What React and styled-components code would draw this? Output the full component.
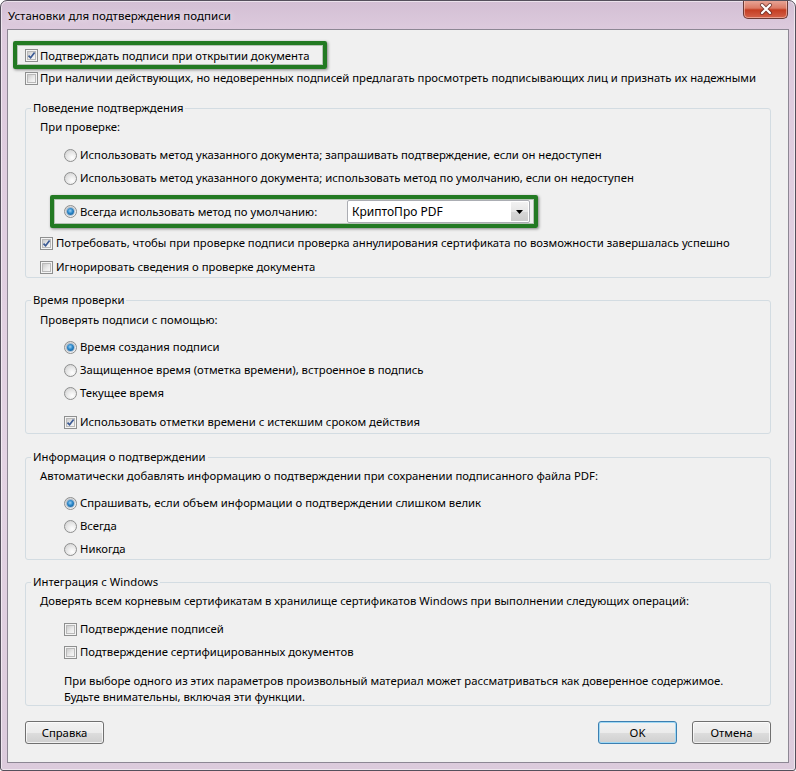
import styled, { createGlobalStyle } from "styled-components";

const GlobalStyle = createGlobalStyle`
  html, body {
    margin: 0;
    padding: 0;
    background: #ffffff;
  }
  body {
    font-family: "Noto Sans", "Open Sans", sans-serif;
    font-size: 11.3px;
    color: #000;
  }
`;

const Window = styled.div`
  width: 796px;
  height: 771px;
  box-sizing: border-box;
  border: 1px solid #55505c;
  border-radius: 7px 7px 3px 3px;
  background: linear-gradient(180deg, #d3bfd4 0px, #ddcadd 28px, #e3d3e3 60%, #dccbdc 100%);
  box-shadow: inset 0 0 0 1px rgba(255, 255, 255, 0.55);
  padding: 0 6px 7px 6px;
  display: flex;
  flex-direction: column;
  overflow: hidden;
`;

const TitleBar = styled.div`
  height: 28px;
  display: flex;
  align-items: flex-start;
  justify-content: space-between;
`;

const Title = styled.div`
  padding: 7px 0 0 1px;
  font-size: 11.5px;
  line-height: 16px;
  color: #000;
  text-shadow: 0 0 6px rgba(255, 255, 255, 0.9);
`;

const CloseButton = styled.div`
  width: 45px;
  height: 19px;
  margin-top: -1px;
  margin-right: 1px;
  box-sizing: border-box;
  border: 1px solid #6b3a36;
  border-top: none;
  border-radius: 0 0 5px 5px;
  background: linear-gradient(180deg, #e9a99b 0%, #dc7a65 45%, #c43d22 55%, #d4614a 100%);
  box-shadow: inset 0 0 0 1px rgba(255, 220, 210, 0.5);
  display: flex;
  align-items: center;
  justify-content: center;
`;

const Client = styled.div`
  flex: 1;
  border: 1px solid #8d8794;
  background: #f0f0f0;
  display: flex;
  flex-direction: column;
`;

const Highlight = styled.div`
  box-sizing: border-box;
  display: flex;
  align-items: center;
  border: 4px solid #237a23;
  border-radius: 2px;
  box-shadow: 1px 1px 3px rgba(0, 0, 0, 0.45), inset 0 0 0 1px rgba(0, 60, 0, 0.25);
  align-self: flex-start;
`;

const TopHighlight = styled(Highlight)`
  margin: 11px 0 0 5px;
  width: 314px;
  height: 28px;
  padding: 0 0 0 8px;
`;

const MethodHighlight = styled(Highlight)`
  margin: 7px 0 0 24px;
  width: 488px;
  height: 33px;
  padding: 0 4px 0 10px;
`;

const Row = styled.div`
  display: flex;
  align-items: center;
  height: 20px;
  margin-top: ${(p) => (p.$mt ?? 3)}px;
  padding-left: ${(p) => p.$indent ?? 0}px;
  white-space: nowrap;
  line-height: 16px;
`;

const Label = styled.span`
  margin-left: ${(p) => p.$gap ?? 3}px;
  flex: none;
`;

const Group = styled.fieldset`
  margin: ${(p) => p.$mt}px 17px 0 17px;
  padding: 0 0 ${(p) => p.$pb ?? 0}px 0;
  min-width: 0;
  border: 1px solid #d3dce2;
  border-radius: 3px;
`;

const Legend = styled.legend`
  margin-left: 5px;
  padding: 0 2px;
  line-height: 16px;
  height: 16px;
`;

const Note = styled.div`
  margin-top: 11px;
  padding-left: 38px;
  line-height: 16px;
`;

const BoxShell = styled.span`
  width: 13px;
  height: 13px;
  box-sizing: border-box;
  flex: none;
  border: 1px solid #8e8f8f;
  background: #f4f4f4;
  padding: 1px;
  display: inline-flex;
`;

const BoxInner = styled.span`
  flex: 1;
  border: 1px solid #b9b9b9;
  background: linear-gradient(135deg, #cbcbcb 0%, #e9e9e9 55%, #f7f7f7 100%);
  position: relative;
`;

const RadioShell = styled.span`
  width: 13px;
  height: 13px;
  box-sizing: border-box;
  flex: none;
  border-radius: 50%;
  border: 1px solid #8e8f8f;
  background: radial-gradient(circle at 65% 70%, #ffffff 0%, #e4e4e4 55%, #c9c9c9 100%);
  display: inline-flex;
  align-items: center;
  justify-content: center;
`;

const RadioDot = styled.span`
  width: 7px;
  height: 7px;
  border-radius: 50%;
  background: radial-gradient(circle at 45% 40%, #9bd1f5 0%, #2a86c8 45%, #0f4f86 100%);
  box-shadow: 0 0 0 1px rgba(60, 110, 160, 0.35);
`;

const Combo = styled.div`
  width: 183px;
  height: 23px;
  box-sizing: border-box;
  border: 1px solid #abadb3;
  border-radius: 2px;
  background: #fff;
  display: flex;
  align-items: center;
  margin-left: auto;
  font-size: 12px;
`;

const ComboText = styled.span`
  flex: 1;
  padding-left: 4px;
`;

const ComboArrow = styled.span`
  width: 17px;
  height: 19px;
  margin-right: 1px;
  background: linear-gradient(180deg, #f2f2f2 0%, #e6e6e6 50%, #d7d7d7 51%, #cdcdcd 100%);
  display: flex;
  align-items: center;
  justify-content: center;
`;

const Footer = styled.div`
  display: flex;
  align-items: center;
  margin-top: 15px;
  padding: 0 17px;
  gap: 15px;
`;

const Button = styled.div`
  width: 79px;
  height: 23px;
  box-sizing: border-box;
  border: 1px solid ${(p) => (p.$default ? "#3c7fb1" : "#707070")};
  border-radius: 3px;
  background: linear-gradient(180deg, #f2f2f2 0%, #ebebeb 50%, #dddddd 51%, #cfcfcf 100%);
  box-shadow: inset 0 0 0 1px ${(p) => (p.$default ? "#9fd8f4" : "rgba(255,255,255,0.7)")};
  display: flex;
  align-items: center;
  justify-content: center;
  &:first-child {
    margin-right: auto;
  }
`;

function Checkbox({ checked }) {
  return (
    <BoxShell>
      <BoxInner>
        {checked && (
          <svg width="9" height="9" viewBox="0 0 9 9" style={{ position: "absolute", left: -1, top: -1 }}>
            <path d="M1.5 4.6 L3.6 6.8 L7.6 1.6" fill="none" stroke="#3b5a94" strokeWidth="1.7" />
          </svg>
        )}
      </BoxInner>
    </BoxShell>
  );
}

function Radio({ checked }) {
  return <RadioShell>{checked && <RadioDot />}</RadioShell>;
}

export default function App() {
  return (
    <>
      <GlobalStyle />
      <Window>
        <TitleBar>
          <Title>Установки для подтверждения подписи</Title>
          <CloseButton>
            <svg width="14" height="12" viewBox="0 0 14 12">
              <path d="M3 2 L11 10 M11 2 L3 10" stroke="#5a2a28" strokeWidth="4" strokeLinecap="round" opacity="0.7" />
              <path d="M3 2 L11 10 M11 2 L3 10" stroke="#ffffff" strokeWidth="2.2" strokeLinecap="round" />
            </svg>
          </CloseButton>
        </TitleBar>
        <Client>
          <TopHighlight>
            <Checkbox checked />
            <Label $gap={2}>Подтверждать подписи при открытии документа</Label>
          </TopHighlight>
          <Row $mt={-1} $indent={17}>
            <Checkbox />
            <Label $gap={2}>
              При наличии действующих, но недоверенных подписей предлагать просмотреть подписывающих лиц и признать их надежными
            </Label>
          </Row>

          <Group $mt={12}>
            <Legend>Поведение подтверждения</Legend>
            <Row $mt={1} $indent={14}>При проверке:</Row>
            <Row $mt={8} $indent={38}>
              <Radio />
              <Label>Использовать метод указанного документа; запрашивать подтверждение, если он недоступен</Label>
            </Row>
            <Row $indent={38}>
              <Radio />
              <Label>Использовать метод указанного документа; использовать метод по умолчанию, если он недоступен</Label>
            </Row>
            <MethodHighlight>
              <Radio checked />
              <Label>Всегда использовать метод по умолчанию:</Label>
              <Combo>
                <ComboText>КриптоПро PDF</ComboText>
                <ComboArrow>
                  <svg width="7" height="4" viewBox="0 0 7 4">
                    <path d="M0 0 H7 L3.5 4 Z" fill="#000" />
                  </svg>
                </ComboArrow>
              </Combo>
            </MethodHighlight>
            <Row $mt={5} $indent={14}>
              <Checkbox checked />
              <Label>
                Потребовать, чтобы при проверке подписи проверка аннулирования сертификата по возможности завершалась успешно
              </Label>
            </Row>
            <Row $mt={4} $indent={14}>
              <Checkbox />
              <Label>Игнорировать сведения о проверке документа</Label>
            </Row>
          </Group>

          <Group $mt={14} $pb={1}>
            <Legend>Время проверки</Legend>
            <Row $mt={2} $indent={14}>Проверять подписи с помощью:</Row>
            <Row $mt={7} $indent={38}>
              <Radio checked />
              <Label>Время создания подписи</Label>
            </Row>
            <Row $indent={38}>
              <Radio />
              <Label>Защищенное время (отметка времени), встроенное в подпись</Label>
            </Row>
            <Row $indent={38}>
              <Radio />
              <Label>Текущее время</Label>
            </Row>
            <Row $mt={9} $indent={38}>
              <Checkbox checked />
              <Label>Использовать отметки времени с истекшим сроком действия</Label>
            </Row>
          </Group>

          <Group $mt={15}>
            <Legend>Информация о подтверждении</Legend>
            <Row $mt={1} $indent={14}>
              Автоматически добавлять информацию о подтверждении при сохранении подписанного файла PDF:
            </Row>
            <Row $mt={7} $indent={38}>
              <Radio checked />
              <Label>Спрашивать, если объем информации о подтверждении слишком велик</Label>
            </Row>
            <Row $indent={38}>
              <Radio />
              <Label>Всегда</Label>
            </Row>
            <Row $indent={38}>
              <Radio />
              <Label>Никогда</Label>
            </Row>
          </Group>

          <Group $mt={14}>
            <Legend>Интеграция с Windows</Legend>
            <Row $mt={1} $indent={14}>
              Доверять всем корневым сертификатам в хранилище сертификатов Windows при выполнении следующих операций:
            </Row>
            <Row $mt={8} $indent={38}>
              <Checkbox />
              <Label>Подтверждение подписей</Label>
            </Row>
            <Row $indent={38}>
              <Checkbox />
              <Label>Подтверждение сертифицированных документов</Label>
            </Row>
            <Note>
              При выборе одного из этих параметров произвольный материал может рассматриваться как доверенное содержимое.
              <br />
              Будьте внимательны, включая эти функции.
            </Note>
          </Group>

          <Footer>
            <Button>Справка</Button>
            <Button $default>OK</Button>
            <Button>Отмена</Button>
          </Footer>
        </Client>
      </Window>
    </>
  );
}
